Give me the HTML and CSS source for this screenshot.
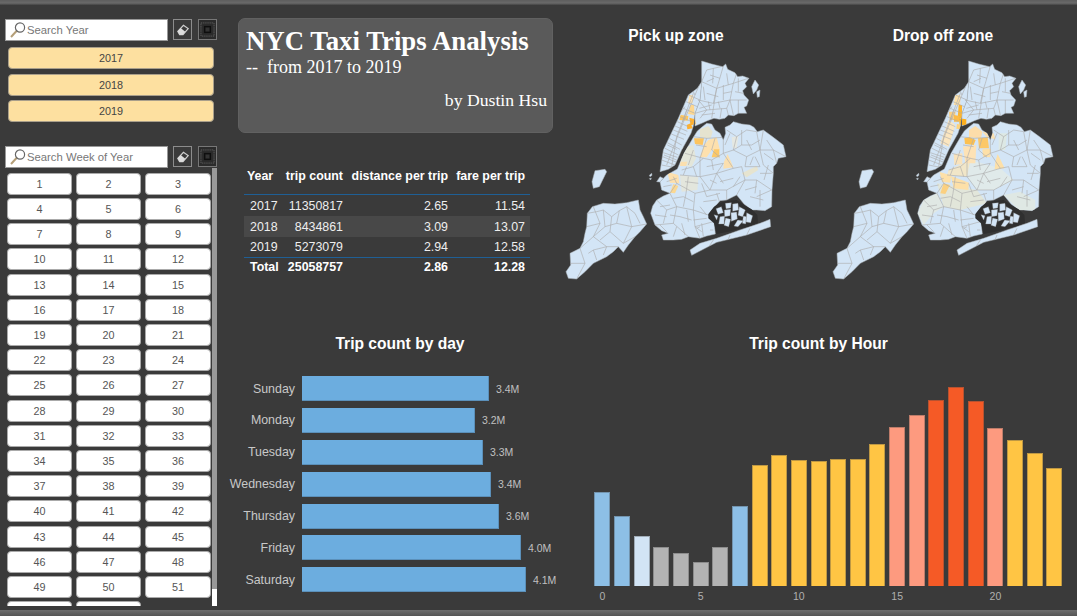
FILE: index.html
```html
<!DOCTYPE html>
<html lang="en">
<head>
  <meta charset="UTF-8">
  <title>NYC Taxi Trips Analysis</title>
  <link rel="stylesheet" href="styles.css">
</head>
<body>
<div class="page">
  <div class="edge-bar"></div>
  <div class="main">

    <aside class="sidebar">
      <div class="search-row">
        <div class="search-box">
          <svg class="search-icon" viewBox="0 0 18 18"><line x1="2" y1="16" x2="8" y2="9.5" class="handle"/><circle cx="11" cy="6.5" r="4.6" class="lens"/></svg>
          <span>Search Year</span>
        </div>
        <div class="tool-btn">
          <svg viewBox="0 0 18 20"><path d="M4 12 L10 5.5 L15 9 L9.5 15.5 L6 15.5 Z" class="eraser"/><path d="M4 12 L7 8.5 L12 12.5 L9.5 15.5 L6 15.5 Z" class="eraser-tip"/></svg>
        </div>
        <div class="tool-btn tool-focus">
          <svg viewBox="0 0 18 20"><rect x="2" y="3" width="14" height="14" class="dots"/><rect x="6" y="7" width="6" height="6" class="core"/></svg>
        </div>
      </div>
      <div class="year-list">
        <div class="year-btn">2017</div>
        <div class="year-btn">2018</div>
        <div class="year-btn">2019</div>
      </div>

      <div class="search-row week-search">
        <div class="search-box">
          <svg class="search-icon" viewBox="0 0 18 18"><line x1="2" y1="16" x2="8" y2="9.5" class="handle"/><circle cx="11" cy="6.5" r="4.6" class="lens"/></svg>
          <span>Search Week of Year</span>
        </div>
        <div class="tool-btn">
          <svg viewBox="0 0 18 20"><path d="M4 12 L10 5.5 L15 9 L9.5 15.5 L6 15.5 Z" class="eraser"/><path d="M4 12 L7 8.5 L12 12.5 L9.5 15.5 L6 15.5 Z" class="eraser-tip"/></svg>
        </div>
        <div class="tool-btn tool-focus">
          <svg viewBox="0 0 18 20"><rect x="2" y="3" width="14" height="14" class="dots"/><rect x="6" y="7" width="6" height="6" class="core"/></svg>
        </div>
      </div>
      <div class="week-scroll">
        <div class="week-grid">
          <div class="week-btn">1</div><div class="week-btn">2</div><div class="week-btn">3</div>
          <div class="week-btn">4</div><div class="week-btn">5</div><div class="week-btn">6</div>
          <div class="week-btn">7</div><div class="week-btn">8</div><div class="week-btn">9</div>
          <div class="week-btn">10</div><div class="week-btn">11</div><div class="week-btn">12</div>
          <div class="week-btn">13</div><div class="week-btn">14</div><div class="week-btn">15</div>
          <div class="week-btn">16</div><div class="week-btn">17</div><div class="week-btn">18</div>
          <div class="week-btn">19</div><div class="week-btn">20</div><div class="week-btn">21</div>
          <div class="week-btn">22</div><div class="week-btn">23</div><div class="week-btn">24</div>
          <div class="week-btn">25</div><div class="week-btn">26</div><div class="week-btn">27</div>
          <div class="week-btn">28</div><div class="week-btn">29</div><div class="week-btn">30</div>
          <div class="week-btn">31</div><div class="week-btn">32</div><div class="week-btn">33</div>
          <div class="week-btn">34</div><div class="week-btn">35</div><div class="week-btn">36</div>
          <div class="week-btn">37</div><div class="week-btn">38</div><div class="week-btn">39</div>
          <div class="week-btn">40</div><div class="week-btn">41</div><div class="week-btn">42</div>
          <div class="week-btn">43</div><div class="week-btn">44</div><div class="week-btn">45</div>
          <div class="week-btn">46</div><div class="week-btn">47</div><div class="week-btn">48</div>
          <div class="week-btn">49</div><div class="week-btn">50</div><div class="week-btn">51</div>
          <div class="week-btn"></div><div class="week-btn"></div>
        </div>
        <div class="scrollbar"><div class="scroll-thumb"></div></div>
      </div>
    </aside>

    <div class="content">
      <section class="summary">
        <div class="title-card">
          <h1>NYC Taxi Trips Analysis</h1>
          <p class="subtitle">--&nbsp; from 2017 to 2019</p>
          <p class="byline">by Dustin Hsu</p>
        </div>
        <table class="stats">
          <thead>
            <tr><th class="c-year">Year</th><th class="c-count">trip count</th><th class="c-dist">distance per trip</th><th class="c-fare">fare per trip</th></tr>
          </thead>
          <tbody>
            <tr><td class="c-year">2017</td><td>11350817</td><td>2.65</td><td>11.54</td></tr>
            <tr class="band"><td class="c-year">2018</td><td>8434861</td><td>3.09</td><td>13.07</td></tr>
            <tr class="short"><td class="c-year">2019</td><td>5273079</td><td>2.94</td><td>12.58</td></tr>
          </tbody>
          <tfoot>
            <tr><td class="c-year">Total</td><td>25058757</td><td>2.86</td><td>12.28</td></tr>
          </tfoot>
        </table>
      </section>

      <section class="maps">
        <div class="map-panel">
          <h2>Pick up zone</h2>
          <svg class="map" viewBox="0 0 720 720">
            <defs>
              <path id="shape-staten" d="M97,470 L130,460 L165,462 L200,458 L235,450 L240,480 L250,500 L260,522 L240,545 L225,560 L205,585 L190,607 L175,590 L160,605 L140,620 L100,640 L75,665 L50,687 L25,685 L18,665 L32,645 L30,610 L60,595 L70,575 L75,550 L80,530 L82,490 Z"/>
              <path id="shape-bronx" d="M425,33 L455,42 L488,50 L497,42 L503,58 L525,68 L533,80 L548,78 L567,85 L555,100 L560,110 L548,122 L552,135 L566,150 L560,168 L552,172 L560,190 L535,190 L522,197 L505,195 L495,205 L478,208 L462,205 L442,212 L425,220 L405,228 L405,190 L420,150 L425,95 Z"/>
              <path id="shape-manhattan" d="M425,95 L412,115 L385,135 L355,205 L310,300 L300,365 L325,358 L345,345 L365,300 L393,250 L400,228 L405,190 L420,150 Z"/>
              <path id="shape-queens" d="M412,243 L425,232 L440,220 L455,222 L465,240 L480,250 L490,270 L497,250 L495,232 L510,225 L520,215 L545,222 L570,225 L582,232 L592,245 L610,240 L640,262 L670,285 L678,320 L655,325 L650,340 L640,350 L640,370 L636,420 L635,470 L615,482 L590,480 L575,480 L552,462 L530,435 L500,450 L480,452 L465,470 L445,495 L462,515 L466,552 L440,558 L420,565 L385,560 L365,568 L340,570 L310,570 L305,555 L325,550 L305,542 L285,525 L272,490 L278,468 L290,450 L310,438 L330,430 L305,420 L300,395 L320,375 L352,357 L372,310 L400,262 Z"/>
              <path id="shape-rockaway" d="M390,600 L420,580 L470,565 L540,540 L600,520 L630,508 L632,530 L560,555 L470,577 L395,616 Z"/>
              <clipPath id="land">
                <use href="#shape-staten"/>
                <use href="#shape-bronx"/>
                <use href="#shape-manhattan"/>
                <use href="#shape-queens"/>
                <use href="#shape-rockaway"/>
              </clipPath>
              <g id="nyc-base" class="land">
                <use href="#shape-staten"/>
                <use href="#shape-bronx"/>
                <use href="#shape-manhattan"/>
                <use href="#shape-queens"/>
                <use href="#shape-rockaway"/>
                <path d="M105,362 L135,358 L140,365 L118,410 L100,415 L96,395 Z"/>
                <path d="M575,110 L585,90 L596,105 L590,120 L580,132 Z"/>
                <path d="M590,125 L600,120 L598,140 L592,142 Z"/>
                <path d="M290,395 L300,380 L310,385 L300,396 Z"/>
                <path d="M268,376 L275,370 L276,376 L270,380 Z"/>
                <path d="M268,386 L274,384 L272,390 Z"/>
              </g>
              <path id="nyc-lines" d="M82,490 L110,485 L130,480 L155,500 L178,482 L200,470 L225,490 L240,520 M100,470 L120,520 L100,560 L60,595 M130,480 L135,530 L100,560 M155,500 L150,545 L190,580 L225,560 M135,530 L170,520 L215,530 L260,522 M200,470 L215,530 L190,580 M100,560 L140,590 L175,590 M60,595 L75,640 L50,687 M100,600 L110,630 M30,640 L75,640 M120,520 L80,530 M170,520 L178,482 M150,545 L120,570 M140,590 L130,615 M85,610 L100,600 L140,590
                M425,95 L440,60 L490,48 M425,95 L470,115 L520,100 L565,85 M490,48 L475,100 L470,115 L460,160 L415,150 M520,100 L530,70 M470,115 L455,205 M520,100 L510,150 L460,160 M510,150 L560,150 M510,150 L520,195 M415,150 L440,180 L500,175 L510,150 M405,190 L440,180 M440,130 L475,140 M430,110 L435,150 M490,130 L515,125 M485,175 L480,205 M450,75 L480,85 M460,55 L458,100 M500,70 L505,105 M535,85 L535,125 M525,125 L550,130 M440,95 L462,85 M418,175 L455,165 M420,205 L440,180 M425,195 L465,190 M500,175 L505,195 M535,150 L535,190 M445,155 L450,180 M490,105 L490,150 M475,155 L480,175
                M352,215 L385,230 M340,240 L378,255 M328,265 L365,285 M315,295 L355,315 M305,330 L345,345 M420,100 L360,240 L320,345 M400,130 L350,260 L335,350 M385,135 L420,150 M335,220 L375,170 M322,285 L350,298 M312,315 L350,330 M345,228 L382,244 M334,252 L372,268 M322,278 L360,298 M310,308 L352,322 M308,320 L348,336 M305,345 L340,352 M370,175 L405,190 M378,155 L412,170 M360,200 L395,215 M395,115 L405,135 M380,180 L368,215
                M500,240 L530,260 L560,240 L590,245 M530,260 L520,300 L560,320 L600,300 L640,300 L678,320 M610,240 L600,300 L610,345 L640,370 M560,320 L555,350 L600,350 M520,300 L490,310 L455,330 L430,325 L400,350 L365,360 M440,265 L420,325 L420,380 L450,420 L500,420 L500,450 M490,262 L490,310 L520,355 L545,350 L555,390 L590,390 L635,420 M420,380 L470,370 L520,355 M450,420 L470,370 M555,390 L530,435 M500,420 L555,390 M360,375 L420,380 M350,400 L405,430 L450,420 M330,430 L350,400 M405,430 L400,480 L445,495 M400,480 L350,470 L330,430 M350,470 L340,520 L385,560 M340,520 L285,525 M290,450 L320,480 L350,470 M320,480 L310,520 M400,480 L405,530 L420,565 M405,530 L460,515 M375,310 L430,325 M400,260 L440,265 L490,262 M590,245 L600,300 M640,300 L650,340 M635,420 L590,440 M560,270 L575,300 M540,380 L520,410 M470,370 L490,400 M370,440 L400,455 M360,500 L395,510 M470,430 L480,460 M600,370 L635,370 M570,345 L580,320
                M620,270 L640,300 M545,240 L545,285 L520,300 M545,285 L575,285 L600,270 M510,250 L495,285 M465,265 L455,300 L480,322 M408,285 L440,290 M400,300 L385,345 M455,330 L460,360 M490,340 L470,370 M585,320 L600,350 M612,310 L640,330 M625,345 L612,390 M590,390 L585,430 M555,420 L590,410 M520,385 L480,395 M440,350 L490,340 M400,350 L410,380 M380,350 L370,375 M340,380 L350,400 M320,395 L350,385 M310,410 L335,405 M375,395 L415,400 M385,380 L378,430 M425,400 L440,440 M440,440 L480,430 M430,455 L470,450 M420,470 L440,495 M378,430 L370,470 M340,445 L370,440 M300,470 L330,465 M285,495 L320,500 M330,495 L360,500 M300,525 L320,545 M350,530 L340,560 M365,520 L375,555 M400,510 L440,505 M425,520 L430,560 M380,480 L385,515 M450,540 L460,540 M440,600 L460,570 M500,580 L510,555 M560,555 L570,535 M450,390 L470,400 M600,420 L600,470 M570,440 L610,450"/>
              <g id="nyc-bay">
                <path class="bay" d="M445,492 L462,470 L480,458 L505,452 L530,450 L552,465 L575,478 L592,495 L594,518 L570,528 L540,536 L505,545 L470,552 L462,520 L445,505 Z"/>
                <path class="island" d="M468,476 L484,470 L490,488 L474,493 Z M496,460 L514,458 L512,474 L498,476 Z M518,462 L534,460 L536,480 L518,484 Z M493,480 L512,478 L510,497 L494,500 Z M538,470 L556,480 L548,500 L534,496 Z M513,488 L530,486 L532,507 L514,514 Z M480,500 L494,498 L492,522 L476,522 Z M497,504 L512,508 L506,530 L492,526 Z M560,488 L578,497 L572,518 L558,516 Z M533,510 L550,512 L534,530 L522,528 Z M550,498 L560,500 L557,522 L547,520 Z M462,494 L474,497 L470,510 Z"/>
                <path class="lines" d="M405,530 L425,545 M410,535 L420,530"/>
              </g>
            </defs>
            <use href="#nyc-base"/>
            <g clip-path="url(#land)">
              <path fill="#e5e3cf" d="M420,238 L445,228 L458,245 L452,265 L420,262 Z"/>
              <path fill="#e3e6da" d="M368,292 L400,285 L408,325 L395,350 L360,345 Z"/>
              <path fill="#e3e6dd" d="M360,375 L415,382 L412,420 L365,425 Z"/>
              <path fill="#e6e4d0" d="M545,370 L590,348 L595,360 L560,382 Z"/>
              <path fill="#e5e8e2" d="M515,262 L535,258 L530,295 L518,295 Z"/>
              <path fill="#fbe3b6" d="M388,135 L400,135 L398,160 L384,160 Z"/>
              <path fill="#fdd78f" d="M392,165 L402,165 L404,195 L384,192 Z"/>
              <path fill="#ffc65c" d="M362,195 L385,198 L383,212 L358,210 Z"/>
              <path fill="#ffb02e" d="M388,203 L405,208 L407,222 L392,226 Z"/>
              <path fill="#ffb02e" d="M380,225 L392,220 L398,235 L382,238 Z"/>
              <path fill="#fcc460" d="M402,265 L432,265 L428,285 L405,282 Z"/>
              <path fill="#fde0ad" d="M445,270 L470,262 L480,300 L455,300 L440,322 L420,322 L432,285 Z"/>
              <path fill="#fcc868" d="M462,298 L478,298 L478,322 L455,322 Z"/>
              <path fill="#fbdfae" d="M503,312 L520,352 L490,356 L492,335 Z"/>
              <path fill="#fde0ad" d="M322,366 L355,375 L358,400 L330,398 Z"/>
              <path fill="#fbd892" d="M340,402 L355,408 L345,430 L330,428 Z"/>
              <path fill="#fbdfae" d="M362,335 L382,335 L378,348 L360,348 Z"/>
            </g>
            <use href="#nyc-lines" class="lines" clip-path="url(#land)"/>
            <use href="#nyc-bay"/>
          </svg>
        </div>

        <div class="map-panel">
          <h2>Drop off zone</h2>
          <svg class="map" viewBox="0 0 720 720">
            <use href="#nyc-base"/>
            <g clip-path="url(#land)">
              <path fill="#e0e8e4" d="M272,490 L290,450 L330,430 L350,470 L320,490 L290,525 Z"/>
              <path fill="#dfe8e4" d="M530,435 L580,425 L625,450 L625,482 L575,480 Z"/>
              <path fill="#e0eaea" d="M430,330 L520,355 L560,390 L500,420 L450,420 L420,380 Z"/>
              <path fill="#dde8e4" d="M515,250 L540,250 L535,300 L515,300 Z"/>
              <path fill="#e2e6da" d="M330,400 L450,420 L480,460 L400,480 L350,470 Z"/>
              <path fill="#f1e6c8" d="M365,360 L430,330 L420,380 L360,375 Z"/>
              <path fill="#fde0a8" d="M385,135 L400,135 L400,165 L380,165 Z"/>
              <path fill="#fbe6c0" d="M365,210 L385,225 L365,290 L340,280 Z"/>
              <path fill="#fdb52f" d="M395,165 L405,165 L405,205 L392,205 Z"/>
              <path fill="#fdd080" d="M366,185 L386,185 L382,210 L368,210 Z"/>
              <path fill="#fdbb46" d="M381,195 L398,198 L396,215 L381,215 Z"/>
              <path fill="#fdb020" d="M396,205 L418,208 L418,225 L398,226 Z"/>
              <path fill="#fdd27a" d="M390,222 L405,225 L400,238 L388,236 Z"/>
              <path fill="#fdddaa" d="M426,240 L445,228 L466,245 L462,265 L426,262 Z"/>
              <path fill="#fbe0b0" d="M466,245 L500,250 L505,268 L480,262 Z"/>
              <path fill="#fcc050" d="M412,264 L428,262 L446,270 L440,285 L414,282 Z"/>
              <path fill="#fcc868" d="M453,265 L482,262 L486,295 L456,295 Z"/>
              <path fill="#fde2b5" d="M408,290 L448,285 L445,340 L415,340 Z"/>
              <path fill="#fde0a8" d="M466,298 L492,296 L490,322 L468,320 Z"/>
              <path fill="#fde0a8" d="M512,312 L533,355 L503,358 L505,335 Z"/>
              <path fill="#f9e3bc" d="M380,312 L406,310 L406,342 L382,345 Z"/>
              <path fill="#fde0a8" d="M338,366 L372,376 L370,398 L345,396 Z"/>
              <path fill="#fde0a8" d="M372,378 L426,398 L424,420 L380,415 Z"/>
              <path fill="#fbd080" d="M350,400 L369,405 L355,432 L340,430 Z"/>
            </g>
            <use href="#nyc-lines" class="lines" clip-path="url(#land)"/>
            <use href="#nyc-bay"/>
          </svg>
        </div>
      </section>

      <section class="day-chart">
        <h2>Trip count by day</h2>
        <div class="day-row"><span class="day-name">Sunday</span><div class="day-bar" style="width:187px"></div><span class="day-value">3.4M</span></div>
        <div class="day-row"><span class="day-name">Monday</span><div class="day-bar" style="width:173px"></div><span class="day-value">3.2M</span></div>
        <div class="day-row"><span class="day-name">Tuesday</span><div class="day-bar" style="width:181px"></div><span class="day-value">3.3M</span></div>
        <div class="day-row"><span class="day-name">Wednesday</span><div class="day-bar" style="width:189px"></div><span class="day-value">3.4M</span></div>
        <div class="day-row"><span class="day-name">Thursday</span><div class="day-bar" style="width:197px"></div><span class="day-value">3.6M</span></div>
        <div class="day-row"><span class="day-name">Friday</span><div class="day-bar" style="width:219px"></div><span class="day-value">4.0M</span></div>
        <div class="day-row"><span class="day-name">Saturday</span><div class="day-bar" style="width:224px"></div><span class="day-value">4.1M</span></div>
      </section>

      <section class="hour-chart">
        <h2>Trip count by Hour</h2>
        <div class="hours">
          <div class="hour"><div class="bar blue" style="height:94px"></div><span class="tick">0</span></div>
          <div class="hour"><div class="bar blue" style="height:70px"></div></div>
          <div class="hour"><div class="bar pale" style="height:50px"></div></div>
          <div class="hour"><div class="bar grey" style="height:39px"></div></div>
          <div class="hour"><div class="bar grey" style="height:33px"></div></div>
          <div class="hour"><div class="bar grey" style="height:24px"></div><span class="tick">5</span></div>
          <div class="hour"><div class="bar grey" style="height:39px"></div></div>
          <div class="hour"><div class="bar blue" style="height:80px"></div></div>
          <div class="hour"><div class="bar yellow" style="height:121px"></div></div>
          <div class="hour"><div class="bar yellow" style="height:131px"></div></div>
          <div class="hour"><div class="bar yellow" style="height:126px"></div><span class="tick">10</span></div>
          <div class="hour"><div class="bar yellow" style="height:125px"></div></div>
          <div class="hour"><div class="bar yellow" style="height:127px"></div></div>
          <div class="hour"><div class="bar yellow" style="height:127px"></div></div>
          <div class="hour"><div class="bar yellow" style="height:142px"></div></div>
          <div class="hour"><div class="bar salmon" style="height:159px"></div><span class="tick">15</span></div>
          <div class="hour"><div class="bar salmon" style="height:171px"></div></div>
          <div class="hour"><div class="bar red" style="height:186px"></div></div>
          <div class="hour"><div class="bar red" style="height:199px"></div></div>
          <div class="hour"><div class="bar red" style="height:185px"></div></div>
          <div class="hour"><div class="bar salmon" style="height:158px"></div><span class="tick">20</span></div>
          <div class="hour"><div class="bar yellow" style="height:146px"></div></div>
          <div class="hour"><div class="bar yellow" style="height:133px"></div></div>
          <div class="hour"><div class="bar yellow" style="height:118px"></div></div>
        </div>
      </section>
    </div>
  </div>
  <div class="edge-bar bottom"></div>
</div>
</body>
</html>
```

FILE: styles.css
```css
* {
  box-sizing: border-box;
}
html, body {
  margin: 0;
  background: #3a3a3a;
}
body {
  font-family: "Liberation Sans", Arial, sans-serif;
}
h1, h2, p {
  margin: 0;
}
.page {
  width: 1077px;
  height: 616px;
  display: flex;
  flex-direction: column;
  overflow: hidden;
  background: #3a3a3a;
}
.edge-bar {
  height: 5px;
  flex: none;
  background: linear-gradient(#5e5e5e, #6a6a6a 60%, #444);
}
.edge-bar.bottom {
  height: 6px;
  background: linear-gradient(#6e6e6e, #555);
}
.main {
  flex: 1;
  display: flex;
  min-height: 0;
}

/* slicers */
.sidebar {
  width: 224px;
  flex: none;
  padding: 14px 0 4px 5px;
  display: flex;
  flex-direction: column;
}
.search-row {
  display: flex;
  align-items: flex-start;
  height: 22px;
}
.week-search {
  margin-top: 24px;
}
.search-box {
  width: 163px;
  height: 22px;
  background: #fff;
  border: 1px solid #999;
  display: flex;
  align-items: center;
  padding-left: 3px;
  font-size: 11.3px;
  color: #777;
}
.search-icon {
  width: 18px;
  height: 18px;
  flex: none;
}
.handle {
  stroke: #b59f78;
  stroke-width: 2;
}
.lens {
  fill: none;
  stroke: #666;
  stroke-width: 1.2;
}
.tool-btn {
  width: 19px;
  height: 21px;
  margin-left: 5px;
  border: 1px solid #8c8c8c;
}
.tool-focus {
  margin-left: 6px;
  border-color: #777;
  background: #2b2b2b;
}
.tool-btn svg {
  display: block;
  width: 100%;
  height: 100%;
}
.eraser {
  fill: none;
  stroke: #d0d0d0;
  stroke-width: 1.3;
}
.eraser-tip {
  fill: #dcdcdc;
}
.dots {
  fill: none;
  stroke: #4c4c4c;
  stroke-width: 2;
  stroke-dasharray: 1 1;
}
.core {
  fill: #333;
  stroke: #0e0e0e;
  stroke-width: 1.6;
}
.year-list {
  display: flex;
  flex-direction: column;
  gap: 4.7px;
  margin: 6px 0 0 3px;
  width: 206px;
}
.year-btn {
  height: 22px;
  background: #fde0a0;
  border: 1px solid #a99f8b;
  border-radius: 4px;
  font-size: 10.8px;
  color: #444;
  display: flex;
  align-items: center;
  justify-content: center;
}
.week-scroll {
  flex: 1;
  min-height: 0;
  display: flex;
  overflow: hidden;
}
.week-grid {
  width: 207px;
  padding: 4.5px 0 0 2px;
  display: grid;
  grid-template-columns: 65px 65px 66px;
  grid-auto-rows: 22px;
  column-gap: 4px;
  row-gap: 3.19px;
  align-content: start;
  overflow: hidden;
}
.week-btn {
  background: #fff;
  border: 1px solid #aaa;
  border-radius: 4px;
  font-size: 10.8px;
  color: #555;
  display: flex;
  align-items: center;
  justify-content: center;
}
.scrollbar {
  width: 5px;
  flex: none;
  background: #fff;
}
.scroll-thumb {
  height: 421px;
  background: #999;
}

/* main grid */
.content {
  flex: 1;
  min-width: 0;
  display: grid;
  grid-template-columns: 336px 1fr;
  grid-template-rows: 329px 1fr;
}
.title-card {
  width: 315px;
  height: 115px;
  margin: 13px 0 0 14px;
  padding: 7px 5px 0 7px;
  border-radius: 7px;
  background: #5a5a5a;
  border: 1px solid #616161;
  color: #fff;
  font-family: "Liberation Serif", "Times New Roman", serif;
}
.title-card h1 {
  font-size: 26.8px;
  line-height: 30px;
  font-weight: bold;
}
.subtitle {
  font-size: 18px;
  line-height: 22px;
}
.byline {
  font-size: 17.7px;
  line-height: 22px;
  margin-top: 11px;
  text-align: right;
}
.stats {
  margin: 32px 0 0 20px;
  width: 286px;
  table-layout: fixed;
  border-collapse: separate;
  border-spacing: 0;
  font-size: 12.4px;
  color: #eee;
}
.stats th, .stats td {
  padding: 0 5px 0 0;
  text-align: right;
  white-space: nowrap;
}
.stats thead th {
  height: 30px;
  font-weight: bold;
  color: #fff;
  border-bottom: 1px solid #1f5f95;
  padding-bottom: 7px;
}
.stats tbody td {
  height: 21px;
}
.stats .short td {
  height: 20px;
}
.stats tfoot td {
  height: 19px;
  font-weight: bold;
  color: #fff;
  border-top: 1px solid #1f5f95;
}
.stats .c-year {
  width: 37px;
  padding-left: 6px;
  text-align: left;
}
.stats th.c-year {
  padding-left: 3px;
}
.stats .c-count {
  width: 67px;
}
.stats .c-dist {
  width: 105px;
}
.stats .c-fare {
  width: 77px;
}
.stats .band td {
  background: #484848;
}

/* maps */
.maps {
  display: flex;
  gap: 35px;
  padding-top: 21px;
}
.map-panel {
  width: 232px;
}
.maps h2, .day-chart h2, .hour-chart h2 {
  font-size: 15.6px;
  line-height: 20px;
  font-weight: bold;
  color: #fff;
  text-align: center;
}
.map {
  display: block;
  width: 240px;
  height: 240px;
  margin-top: 4px;
  filter: blur(0.3px);
}
.land {
  fill: #d3e5f6;
  stroke: #adb4ba;
  stroke-width: 1.5;
}
.lines {
  fill: none;
  stroke: #adadad;
  stroke-width: 1.9;
}
.bay {
  fill: #2f2f2f;
}
.island {
  fill: #d3e5f6;
  stroke: #8a8a8a;
  stroke-width: 1;
}

/* trip count by day */
.day-chart h2 {
  padding-left: 16px;
  margin-bottom: 22px;
}
.day-row {
  display: flex;
  align-items: center;
  height: 25px;
  margin-bottom: 6.9px;
}
.day-name {
  width: 71px;
  margin-right: 7px;
  text-align: right;
  font-size: 12.4px;
  color: #c8c8c8;
}
.day-bar {
  height: 25px;
  background: #6caddf;
  border: 1px solid #5b90ba;
  border-left: 0;
  border-top: 0;
}
.day-value {
  margin-left: 7px;
  font-size: 10.5px;
  color: #c0c0c0;
}

/* trip count by hour */
.hour-chart h2 {
  margin-bottom: 16px;
}
.hours {
  display: flex;
  align-items: flex-start;
  gap: 3.67px;
  height: 233px;
  margin-left: 34.3px;
}
.hour {
  width: 16px;
  height: 233px;
  position: relative;
  display: flex;
  flex-direction: column;
  justify-content: flex-end;
  padding-bottom: 17px;
}
.bar {
  width: 16px;
  flex: none;
  border: 1px solid rgba(70, 70, 70, 0.35);
  border-bottom: 0;
}
.blue { background: #8dbfe6; }
.pale { background: #d2e4f5; }
.grey { background: #b3b3b3; }
.yellow { background: #ffc544; }
.salmon { background: #fd9a7f; }
.red { background: #f55a26; }
.tick {
  position: absolute;
  left: -10px;
  width: 36px;
  bottom: 0;
  line-height: 13px;
  text-align: center;
  font-size: 10.5px;
  color: #b0b0b0;
}
```
